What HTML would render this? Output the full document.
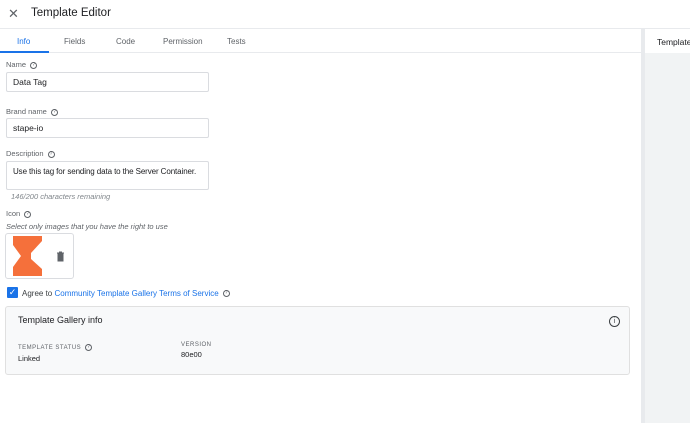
<!DOCTYPE html>
<html><head><meta charset="utf-8"><style>
*{box-sizing:border-box;margin:0;padding:0}
body{width:690px;height:423px;overflow:hidden;background:#fff;font-family:"Liberation Sans",Arial,sans-serif;color:#202124;position:relative}
.abs{position:absolute}
.lbl{font-size:7.5px;color:#5f6368}
.q{display:inline-block;width:7px;height:7px;border:1px solid #5f6368;border-radius:50%;font-size:5px;line-height:5px;text-align:center;vertical-align:middle;margin-left:4px;color:#5f6368}
.inp{position:absolute;left:6px;width:203px;border:1px solid #dadce0;border-radius:2px;font-size:8.5px;padding-left:6px;display:flex;align-items:center;white-space:nowrap}
</style></head><body>
<div class="abs" style="left:0;top:0;width:690px;height:29px;border-bottom:1px solid #e8eaed"></div>
<div class="abs" style="left:8px;top:6px;font-size:13px;color:#5f6368">✕</div>
<div class="abs" style="left:31px;top:7px;font-size:11.5px">Template Editor</div>
<div class="abs" style="left:0;top:29px;width:641px;height:24px;border-bottom:1px solid #e8eaed"></div>
<div class="abs" style="left:0;top:51px;width:49px;height:2px;background:#1a73e8"></div>
<div class="abs" style="top:37px;left:17px;font-size:8px;color:#1a73e8">Info</div>
<div class="abs" style="top:37px;left:64px;font-size:8px;color:#5f6368">Fields</div>
<div class="abs" style="top:37px;left:116px;font-size:8px;color:#5f6368">Code</div>
<div class="abs" style="top:37px;left:163px;font-size:8px;color:#5f6368">Permission</div>
<div class="abs" style="top:37px;left:227px;font-size:8px;color:#5f6368">Tests</div>
<div class="abs" style="left:641px;top:29px;width:4px;height:394px;background:#e8eaed"></div>
<div class="abs" style="left:645px;top:53px;width:45px;height:370px;background:#f1f3f4"></div>
<div class="abs" style="left:657px;top:37px;font-size:8.5px">Template</div>
<div class="abs lbl" style="left:6px;top:60px">Name<span class="q">?</span></div>
<div class="inp" style="top:72px;height:20px">Data Tag</div>
<div class="abs lbl" style="left:6px;top:107px">Brand name<span class="q">?</span></div>
<div class="inp" style="top:118px;height:20px">stape-io</div>
<div class="abs lbl" style="left:6px;top:149px">Description<span class="q">?</span></div>
<div class="inp" style="top:161px;height:29px;align-items:flex-start;padding-top:5px;font-size:8px;letter-spacing:-0.1px">Use this tag for sending data to the Server Container.</div>
<div class="abs" style="left:11px;top:192px;font-size:7.5px;font-style:italic;color:#80868b">146/200 characters remaining</div>
<div class="abs lbl" style="left:6px;top:209px">Icon<span class="q">?</span></div>
<div class="abs" style="left:6px;top:222px;font-size:7.5px;font-style:italic;color:#5f6368">Select only images that you have the right to use</div>
<div class="abs" style="left:5px;top:233px;width:69px;height:46px;border:1px solid #dadce0;border-radius:3px"></div>
<svg class="abs" style="left:13px;top:236px" width="30" height="41"><path d="M0 0H29V5L18 17V23L29 33V40H0V31L8 20L0 9Z" fill="#f5703b"/></svg>
<svg class="abs" style="left:56px;top:251px" width="9" height="11"><path d="M1 2H8M3 1H6M2 3H7V10H2Z" fill="#5f6368" stroke="#5f6368" stroke-width="1"/></svg>
<div class="abs" style="left:7px;top:287px;width:11px;height:11px;background:#1a73e8;border-radius:1px;color:#fff;font-size:9px;line-height:11px;text-align:center">✓</div>
<div class="abs" style="left:22px;top:289px;font-size:8px;color:#3c4043">Agree to <span style="color:#1a73e8">Community Template Gallery Terms of Service</span><span class="q">?</span></div>
<div class="abs" style="left:5px;top:306px;width:625px;height:69px;background:#f8f9fa;border:1px solid #e0e0e0;border-radius:3px"></div>
<div class="abs" style="left:18px;top:315px;font-size:9px">Template Gallery info</div>
<div class="abs" style="left:609px;top:316px;width:11px;height:11px;border:1px solid #3c4043;border-radius:50%;font-size:7px;line-height:9px;text-align:center;color:#3c4043">i</div>
<div class="abs" style="left:18px;top:344px;font-size:6px;letter-spacing:.5px;color:#5f6368">TEMPLATE STATUS<span class="q">?</span></div>
<div class="abs" style="left:18px;top:354px;font-size:7.5px">Linked</div>
<div class="abs" style="left:181px;top:342px;font-size:6px;letter-spacing:.5px;color:#5f6368">VERSION</div>
<div class="abs" style="left:181px;top:350px;font-size:7.5px">80e00</div>
</body></html>
